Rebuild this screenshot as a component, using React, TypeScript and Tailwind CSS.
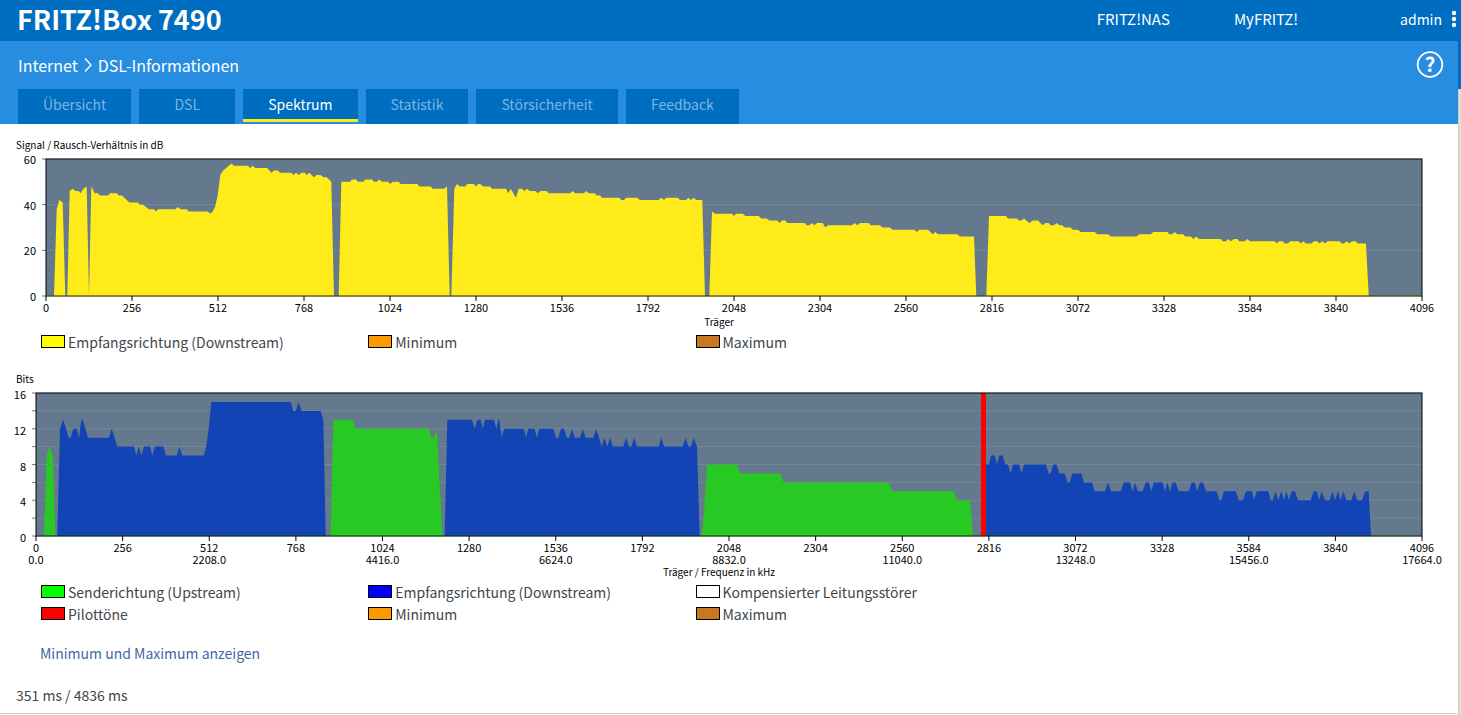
import clsx from 'clsx'

const tabs = ['Übersicht', 'DSL', 'Spektrum', 'Statistik', 'Störsicherheit', 'Feedback']

interface Segment {
  start: number
  points: string
}

interface Series {
  color: string
  segments: Segment[]
}

// Points are "dx,value": dx in thirds of a chart unit, counted from start
const snr: Series = {
  color: '#ffea1a',
  segments: [
    {
      start: 0,
      points:
        '162,0 170,38 178,42 188,41 196,0 202,0 209,46 218,47 226,46 236,46 242,45 250,47 260,48 267,0 274,48 284,45 294,45 300,44 324,44 330,45 350,45 356,44 366,44 388,41 414,41 420,40 430,40 446,38 462,38 468,37 474,38 526,38 533,39 541,38 560,38 566,37 624,37 630,36 638,37 645,39 653,44 661,53 670,55 686,57 695,58 702,57 744,57 750,56 758,57 766,56 802,56 814,54 822,55 834,55 840,54 874,54 880,53 888,54 896,53 904,54 914,54 920,53 928,54 942,52 950,53 962,53 970,52 980,52 994,50 1002,0 1016,0 1024,50 1050,50 1056,51 1068,51 1074,50 1090,50 1096,51 1116,51 1122,50 1130,50 1138,51 1146,50 1164,50 1170,49 1178,50 1196,50 1202,49 1252,49 1258,48 1292,48 1298,47 1332,47 1341,48 1349,0 1354,0 1363,47 1371,49 1379,48 1396,48 1402,49 1422,49 1427,48 1435,49',
    },
    {
      start: 480,
      points:
        '0,49 10,48 30,48 36,47 78,47 85,45 92,47 100,45 108,43 116,47 126,47 133,46 141,47 149,46 166,46 173,45 181,46 200,46 206,45 270,45 278,46 286,45 312,45 318,46 326,45 344,45 350,44 360,44 366,43 418,43 424,42 432,42 438,43 472,43 480,42 536,42 544,43 552,42 558,43 594,43 600,42 618,42 625,43 633,42 641,43 649,42 667,42 675,0 688,0 696,37 705,36 756,36 762,35 768,36 788,36 796,35 836,35 844,34 860,34 868,33 892,33 898,32 906,33 916,33 922,32 974,32 980,31 988,31 996,32 1003,31 1011,32 1028,32 1036,30 1044,31 1116,31 1124,32 1132,31 1140,32 1166,32 1172,31 1200,31 1206,30 1230,30 1238,29 1304,29 1310,28 1318,29 1344,29 1358,27 1366,28 1374,27 1432,27 1440,26',
    },
    {
      start: 970,
      points:
        '12,26 19,0 49,0 57,35 108,35 114,34 140,34 146,33 154,33 162,34 178,32 188,33 204,33 218,31 226,32 236,32 242,31 252,31 260,32 268,31 276,31 284,30 302,30 308,29 324,29 332,28 374,28 382,27 414,27 422,26 500,26 508,27 542,27 550,28 592,28 598,27 606,27 614,28 622,27 640,27 646,26 662,26 670,25 679,26 687,25 752,25 758,24 768,24 775,25 783,24 791,25 802,25 808,24 824,24 832,25 840,24 914,24 920,23 928,24 938,24 944,23 954,23 960,24 986,24 992,23 1000,24 1008,23 1024,23 1032,24 1042,24 1048,23 1057,24 1065,23 1073,24 1108,24 1116,23 1122,23 1130,24 1138,23 1146,24 1156,24 1164,23 1188,23 1196,0',
    },
  ],
}

const upstream: Series = {
  color: '#29c924',
  segments: [
    { start: 0, points: '132,0 140,9 148,10 158,9 166,0 992,0 1000,13 1058,13 1068,12 1286,12 1294,11 1301,11 1310,12 1327,0' },
    { start: 480, points: '665,0 673,3 681,8 772,8 780,7 902,7 910,6 1228,6 1236,5 1422,5 1430,4' },
    { start: 970, points: '0,4 9,0' },
  ],
}

const downstream: Series = {
  color: '#1244b5',
  segments: [
    {
      start: 0,
      points:
        '172,0 180,12 190,13 206,11 212,11 220,12 230,12 237,11 244,13 248,13 264,11 326,11 335,12 352,10 402,10 409,9 416,10 424,9 432,10 450,10 457,9 465,10 490,10 498,9 530,9 538,10 547,9 611,9 619,10 626,12 634,15 872,15 880,14 887,14 895,15 905,14 962,14 970,13 977,0 1334,0 1342,13 1416,13 1424,12 1432,13',
    },
    {
      start: 480,
      points:
        '2,13 8,12 15,13 42,13 49,12 55,13 58,13 65,11 72,12 132,12 138,11 145,12 164,12 170,11 178,12 220,12 228,11 235,11 243,12 252,12 260,11 268,11 276,12 284,11 300,11 308,12 317,11 340,11 349,12 365,10 373,11 382,10 390,11 399,10 430,10 438,11 447,10 454,10 463,11 471,10 536,10 544,11 552,10 608,10 617,11 625,10 633,10 641,11 651,10 659,0',
    },
    {
      start: 970,
      points:
        '32,0 44,8 56,8 64,9 74,9 81,8 88,9 98,9 106,8 114,8 122,7 129,8 148,8 154,7 162,8 228,8 236,7 242,7 250,8 260,8 268,7 284,7 293,6 299,6 307,7 334,7 342,6 366,6 374,5 405,5 414,6 423,5 452,5 461,6 480,6 488,5 495,6 504,5 518,5 527,6 537,6 544,5 551,6 578,6 584,5 592,6 600,5 608,6 617,6 626,5 656,5 665,6 674,6 682,5 690,6 699,6 708,5 740,5 748,4 754,4 762,5 797,5 806,4 819,4 828,5 846,5 852,4 860,5 895,5 902,4 908,4 917,5 925,4 934,5 942,4 949,5 957,4 965,5 975,5 984,4 1022,4 1031,5 1040,5 1047,4 1055,5 1065,4 1079,4 1087,5 1095,4 1104,5 1112,4 1120,5 1129,4 1144,4 1153,5 1162,4 1176,4 1186,5 1196,5 1203,0',
    },
  ],
}

const carriers = Array.from({ length: 17 }, (_, i) => i * 256)

interface ChartProps {
  title: string
  xTitle: string
  left: number
  height: number
  top: number
  bottom: number
  max: number
  gridStep: number
  labelStep: number
  labelShift: number
  series: Series[]
  baseColor: string
  pilot?: number
  frequencies?: boolean
}

function SpectrumChart({
  title, xTitle, left, height, top, bottom, max, gridStep, labelStep, labelShift, series, baseColor, pilot, frequencies,
}: ChartProps) {
  const right = 1422
  const x = (carrier: number) => left + (carrier / 4096) * (right - left)
  const y = (value: number) => bottom - (value / max) * (bottom - top)

  const outline = (s: Series) =>
    s.segments
      .flatMap(({ start, points }) =>
        points.split(' ').map((p) => {
          const [dx, value] = p.split(',').map(Number)
          return `${(start + dx / 3).toFixed(1)},${y(value).toFixed(1)}`
        }),
      )
      .join(' ')

  const gridValues = Array.from({ length: max / gridStep + 1 }, (_, i) => i * gridStep)

  return (
    <svg className="block w-full" viewBox={`0 0 1458 ${height}`} role="img" aria-label={title}>
      <rect x={left} y={top} width={right - left} height={bottom - top} fill="#64798d" />
      {gridValues.map((v) => (
        <g key={v}>
          <line x1={left - 4} x2={left} y1={y(v)} y2={y(v)} stroke="#64798d" />
          <line x1={left} x2={right} y1={y(v)} y2={y(v)} stroke="#8497a9" strokeOpacity="0.5" />
          {v % labelStep === 0 && (
            <text x={left - 10} y={y(v) + labelShift} textAnchor="end" fontSize="11">{v}</text>
          )}
        </g>
      ))}
      {series.map((s) => (
        <polygon key={s.color} points={outline(s)} fill={s.color} />
      ))}
      {pilot && <rect x={pilot} y={top} width="5" height={bottom - top} fill="#ff0000" />}
      <rect x={left} y={top} width={right - left} height={bottom - top} fill="none" stroke="#000" />
      <line x1={left} x2={right} y1={bottom} y2={bottom} stroke={baseColor} strokeOpacity="0.3" />
      {carriers.map((c) => (
        <g key={c} textAnchor="middle" fontSize="11">
          <line x1={x(c)} x2={x(c)} y1={bottom} y2={bottom + 5} stroke="#000" />
          <text x={x(c)} y={bottom + 16}>{c}</text>
          {frequencies && c % 512 === 0 && <text x={x(c)} y={bottom + 28}>{(c * 4.3125).toFixed(1)}</text>}
        </g>
      ))}
      <text x="16" y={top - 10} fontSize="10">{title}</text>
      <text x="719" y={bottom + (frequencies ? 40 : 30)} textAnchor="middle" fontSize="10">{xTitle}</text>
    </svg>
  )
}

function LegendItem({ swatch, label }: { swatch: string; label: string }) {
  return (
    <li className="flex h-[22px] items-start gap-[3px]">
      <span className={clsx('mt-1 h-[13px] w-6 border border-black', swatch)} />
      <span className="text-[14px] leading-[22px]">{label}</span>
    </li>
  )
}

const legendClass = 'ml-[41px] mr-[108px] grid grid-cols-[1fr_1fr_2fr]'

function App() {
  return (
    <div className="flex min-h-screen flex-col bg-white font-['Noto_Sans_CJK_SC','Noto_Sans',sans-serif] text-[#3f464c]">
      <header className="flex h-[41px] items-center justify-between bg-[#006ec0] pr-1 pb-1 pl-[17px] text-white">
        <h1 className="text-[27px] leading-[36px] font-bold">FRITZ!Box 7490</h1>
        <nav className="flex items-center text-[15px] leading-[22px]">
          <a href="#nas" className="mr-16">FRITZ!NAS</a>
          <a href="#myfritz" className="mr-[102px]">MyFRITZ!</a>
          <button type="button" className="flex items-center gap-[9px] text-[14px]">
            admin
            <svg width="6" height="18" viewBox="0 0 6 18" fill="currentColor" aria-hidden="true">
              <circle cx="3" cy="3" r="2.2" />
              <circle cx="3" cy="9" r="2.2" />
              <circle cx="3" cy="15" r="2.2" />
            </svg>
          </button>
        </nav>
      </header>

      <div className="flex flex-1">
        <div className="min-w-0 flex-1">
          <div className="bg-[#278de1] pr-[14px] pl-[18px]">
            <div className="flex h-12 items-center justify-between text-white">
              <div className="flex items-center gap-[6px] text-[16px] leading-6">
                <a href="#internet">Internet</a>
                <svg width="8" height="16" viewBox="0 0 8 16" fill="none" stroke="currentColor" strokeWidth="1.3" aria-hidden="true">
                  <path d="M1 1.5L7 8L1 14.5" />
                </svg>
                <span>DSL-Informationen</span>
              </div>
              <button type="button" aria-label="Hilfe">
                <svg width="28" height="28" viewBox="0 0 28 28" fill="none" stroke="currentColor">
                  <circle cx="14" cy="13.5" r="12.3" strokeWidth="1.8" />
                  <path d="M10.6 8.6C12 6.2 17.2 6.1 17.2 9.6C17.2 12.4 13.8 12.2 13.8 16" strokeWidth="2.8" />
                  <circle cx="13.8" cy="19.2" r="1.9" fill="currentColor" stroke="none" />
                </svg>
              </button>
            </div>
            <nav className="flex h-[35px] gap-2 text-[14px]">
              {tabs.map((tab) => (
                <a
                  key={tab}
                  href={`#${tab}`}
                  className={clsx(
                    'min-w-24 bg-[#006ec0] px-[25px] text-center leading-[30px]',
                    tab === 'Spektrum' ? 'h-[33px] border-b-3 border-[#ffea1a] text-white' : 'text-[#7db5e2]',
                  )}
                >
                  {tab}
                </a>
              ))}
            </nav>
          </div>

          <main className="border-b border-[#cccccc] pb-[7px]">
            <SpectrumChart
              title="Signal / Rausch-Verhältnis in dB"
              xTitle="Träger"
              left={46}
              height={207}
              top={35}
              bottom={172}
              max={60}
              gridStep={20}
              labelStep={20}
              labelShift={5}
              series={[snr]}
              baseColor="#ffea1a"
            />
            <ul className={legendClass}>
              <LegendItem swatch="bg-[#ffff00]" label="Empfangsrichtung (Downstream)" />
              <LegendItem swatch="bg-[#ff9900]" label="Minimum" />
              <LegendItem swatch="bg-[#c8781e]" label="Maximum" />
            </ul>
            <SpectrumChart
              title="Bits"
              xTitle="Träger / Frequenz in kHz"
              left={36}
              height={228}
              top={40}
              bottom={183}
              max={16}
              gridStep={2}
              labelStep={4}
              labelShift={6}
              series={[upstream, downstream]}
              baseColor="#29c924"
              pilot={981}
              frequencies
            />
            <ul className={legendClass}>
              <LegendItem swatch="bg-[#00ff00]" label="Senderichtung (Upstream)" />
              <LegendItem swatch="bg-[#0000ff]" label="Empfangsrichtung (Downstream)" />
              <LegendItem swatch="bg-white" label="Kompensierter Leitungsstörer" />
              <LegendItem swatch="bg-[#ff0000]" label="Pilottöne" />
              <LegendItem swatch="bg-[#ff9900]" label="Minimum" />
              <LegendItem swatch="bg-[#c8781e]" label="Maximum" />
            </ul>
            <p className="mt-[17px] ml-10 text-[14px] leading-[22px]">
              <a href="#minmax" className="text-[#3f69a5]">Minimum und Maximum anzeigen</a>
            </p>
            <p className="mt-5 ml-4 text-[14px] leading-[22px]">351 ms / 4836 ms</p>
          </main>
        </div>
        {/* Scroll track */}
        <div className="flex w-[3px] flex-col">
          <div className="h-12 bg-[#006ec0]" />
          <div className="flex-1 border-l border-[#cfcbc2] bg-[#e3dfd6]" />
        </div>
      </div>
    </div>
  )
}

export default App
